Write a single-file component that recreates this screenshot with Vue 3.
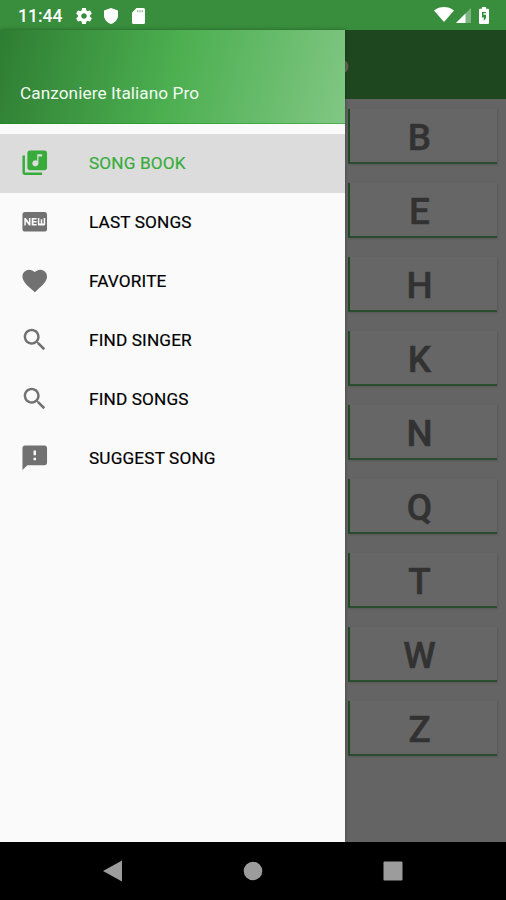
<script setup>
const items = [
  { label: 'SONG BOOK', icon: 'M20 2H8c-1.1 0-2 .9-2 2v12c0 1.100.9 2 2 2h12c1.100 0 2-.9 2-2V4c0-1.100-.9-2-2-2zm-2 5h-3v5.500c0 1.380-1.120 2.500-2.500 2.500S10 13.880 10 12.500s1.120-2.500 2.500-2.500c.57 0 1.080.190 1.500.510V5h4v2zM4 6H2v14c0 1.100.9 2 2 2h14v-2H4V6z', active: true },
  { label: 'LAST SONGS', icon: 'M20 4H4c-1.110 0-1.990.890-1.990 2L2 18c0 1.110.890 2 2 2h16c1.110 0 2-.890 2-2V6c0-1.110-.890-2-2-2zM8.500 15H7.300l-2.550-3.500V15H3.500V9h1.250l2.500 3.500V9H8.500v6zm5-4.740H11v1.120h2.500v1.260H11v1.110h2.500V15h-4V9h4v1.260zm7 3.740c0 .55-.45 1-1 1h-4c-.55 0-1-.45-1-1V9h1.250v4.510h1.130V9.990h1.250v3.510h1.120V9h1.250v5z' },
  { label: 'FAVORITE', icon: 'M12 21.350l-1.450-1.320C5.400 15.360 2 12.280 2 8.500 2 5.420 4.420 3 7.500 3c1.740 0 3.410.810 4.500 2.090C13.090 3.810 14.760 3 16.500 3 19.580 3 22 5.420 22 8.500c0 3.780-3.400 6.860-8.550 11.540L12 21.350z' },
  { label: 'FIND SINGER', icon: 'M15.500 14h-.79l-.28-.27C15.410 12.590 16 11.110 16 9.500 16 5.910 13.090 3 9.500 3S3 5.910 3 9.500 5.910 16 9.500 16c1.610 0 3.090-.590 4.230-1.570l.27.280v.790l5 4.990L20.490 19l-4.990-5zm-6 0C7.010 14 5 11.990 5 9.500S7.010 5 9.500 5 14 7.010 14 9.500 11.990 14 9.500 14z' },
  { label: 'FIND SONGS', icon: 'M15.500 14h-.79l-.28-.27C15.410 12.590 16 11.110 16 9.500 16 5.910 13.090 3 9.500 3S3 5.910 3 9.500 5.910 16 9.500 16c1.610 0 3.090-.590 4.230-1.570l.27.280v.790l5 4.990L20.490 19l-4.990-5zm-6 0C7.010 14 5 11.990 5 9.500S7.010 5 9.500 5 14 7.010 14 9.500 11.990 14 9.500 14z' },
  { label: 'SUGGEST SONG', icon: 'M20 2H4c-1.100 0-1.990.9-1.990 2L2 22l4-4h14c1.100 0 2-.9 2-2V4c0-1.100-.9-2-2-2zm-7 12h-2v-2h2v2zm0-4h-2V6h2v4z' },
]
const letters = ['B', 'E', 'H', 'K', 'N', 'Q', 'T', 'W', 'Z']
</script>

<template>
  <div class="screen">
    <header class="status">
      <span class="time">11:44</span>
      <svg class="gear" viewBox="2 2 20 20"><path d="M19.430 12.980c.04-.32.07-.64.07-.98s-.03-.66-.07-.98l2.110-1.650c.19-.15.24-.42.12-.64l-2-3.460c-.12-.22-.39-.3-.61-.22l-2.490 1c-.52-.4-1.080-.73-1.690-.98l-.38-2.650C14.460 2.180 14.250 2 14 2h-4c-.25 0-.46.18-.49.42l-.38 2.650c-.61.25-1.170.59-1.690.98l-2.490-1c-.23-.09-.49 0-.61.22l-2 3.460c-.13.22-.07.49.12.64l2.110 1.650c-.04.32-.07.65-.07.98s.03.66.07.98l-2.110 1.650c-.19.15-.24.42-.12.64l2 3.460c.12.22.39.3.61.22l2.490-1c.52.4 1.080.73 1.690.98l.38 2.650c.03.24.24.42.49.42h4c.25 0 .46-.18.49-.42l.38-2.650c.61-.25 1.170-.59 1.690-.98l2.490 1c.23.09.49 0 .61-.22l2-3.460c.12-.22.07-.49-.12-.64l-2.110-1.650zM12 15.500c-1.930 0-3.500-1.570-3.500-3.500s1.570-3.500 3.500-3.500 3.500 1.570 3.500 3.500-1.570 3.500-3.500 3.500z" /></svg>
      <svg class="shield" viewBox="0 0 14 16"><path d="M7 0l7 2.600v5C14 11.500 11 15 7 16 3 15 0 11.500 0 7.600v-5z" /></svg>
      <svg class="card-icon" viewBox="0 0 13 16"><path d="M4.500 0H11.500Q13 0 13 1.500V14.500Q13 16 11.500 16H1.500Q0 16 0 14.500V4.500z" /><path class="pins" d="M5 2.200h1.300v2H5zM7.300 2.200h1.300v2H7.300zM9.600 2.200h1.300v2H9.600z" /></svg>
      <span class="spacer"></span>
      <svg class="wifi" viewBox="0 0 20 15"><path d="M0 3.400C5.800-1.100 14.200-1.100 20 3.400L10 15z" /></svg>
      <svg class="signal" viewBox="0 0 15 15"><path d="M15 0v15H0z" opacity=".35" /><path d="M9.500 5.500V15H0z" /></svg>
      <svg class="battery" viewBox="0 0 10 17"><path fill-rule="evenodd" d="M3 0h4v1.700h2q1 0 1 1V16q0 1-1 1H1q-1 0-1-1V2.700q0-1 1-1h2zM3 5h4v1.300H4.500v1.400H7v3.200L4.800 14V10.500H3z" /></svg>
    </header>

    <main class="body">
      <div class="toolbar"><span class="title">Canzoniere Italiano Pro</span></div>
      <div class="letters">
        <div v-for="l in letters" :key="l" class="tile">{{ l }}</div>
      </div>
      <aside class="drawer">
        <div class="head">Canzoniere Italiano Pro</div>
        <nav class="menu">
          <a v-for="i in items" :key="i.label" class="item" :class="{ active: i.active }">
            <svg class="icon" viewBox="0 0 24 24"><path :d="i.icon" /></svg>
            <span>{{ i.label }}</span>
          </a>
        </nav>
      </aside>
    </main>

    <footer class="navbar">
      <svg viewBox="0 0 20 22"><path d="M0 11L19 .5v21z" /></svg>
      <svg viewBox="0 0 20 22"><circle cx="10" cy="11" r="9.300" /></svg>
      <svg viewBox="0 0 20 22"><rect x=".5" y="1.500" width="19" height="19" rx="1" /></svg>
    </footer>
  </div>
</template>

<style>
body {
  margin: 0;
}
</style>

<style scoped>
.screen {
  display: flex;
  flex-direction: column;
  width: 506px;
  height: 900px;
  overflow: hidden;
  font-family: Roboto, "Liberation Sans", sans-serif;
}
.status {
  display: flex;
  align-items: center;
  flex: none;
  box-sizing: border-box;
  height: 30px;
  padding: 1px 16px 0 18px;
  background: #388e3c;
  color: #fff;
}
.status svg {
  flex: none;
  fill: #fff;
}
.status .pins {
  fill: #8fc092;
}
.time {
  width: 58px;
  font-size: 17.500px;
  font-weight: 500;
  line-height: 30px;
}
.gear {
  width: 16px;
  height: 16px;
}
.shield {
  width: 14px;
  height: 16px;
  margin-left: 12px;
}
.card-icon {
  width: 13px;
  height: 16px;
  margin-left: 14px;
}
.spacer {
  flex: 1;
}
.wifi {
  width: 20px;
  height: 15px;
  margin-bottom: 2px;
}
.signal {
  width: 15px;
  height: 15px;
  margin: 0 8px 0 2px;
}
.battery {
  width: 10px;
  height: 17px;
  margin-right: 1px;
}
.body {
  position: relative;
  flex: 1;
  min-height: 0;
  background: #646464;
}
.toolbar {
  display: flex;
  align-items: center;
  height: 69px;
  background: #1f471f;
}
.title {
  width: 349px;
  font-size: 24.600px;
  font-weight: 500;
  text-align: right;
  white-space: nowrap;
  color: #666;
}
.letters {
  display: flex;
  flex-direction: column;
  gap: 19.050px;
  padding: 9.500px 9px 0 348px;
}
.tile {
  box-sizing: border-box;
  height: 55px;
  padding-right: 8px;
  border-left: 2px solid #1f4a22;
  border-bottom: 2px solid #2b4d2f;
  background: #666;
  box-shadow: 1px 1px 2px rgba(0, 0, 0, 0.12);
  color: #323232;
  font-size: 36.900px;
  font-weight: 500;
  line-height: 58px;
  text-align: center;
  -webkit-text-stroke: 0.500px #323232;
}
.drawer {
  position: absolute;
  top: 0;
  bottom: 0;
  left: 0;
  width: 345px;
  background: #fafafa;
  box-shadow: 0 0 4px rgba(0, 0, 0, 0.35);
}
.head {
  box-sizing: border-box;
  height: 93.500px;
  padding: 52px 20px 0;
  background: linear-gradient(105deg, #2e7d32 0%, #4caf50 50%, #81c784 100%);
  box-shadow: inset 0 -1px 0 rgba(0, 145, 10, 0.400);
  color: #f2faf2;
  font-size: 17.200px;
  line-height: 22px;
  letter-spacing: 0.080px;
}
.menu {
  display: flex;
  flex-direction: column;
  padding-top: 10px;
}
.item {
  display: flex;
  align-items: center;
  height: 59px;
  padding-left: 20px;
  color: #000;
  font-size: 17.200px;
  letter-spacing: 0.150px;
  -webkit-text-stroke: 0.200px currentColor;
}
.item.active {
  background: #dcdcdc;
  color: #37ac3b;
}
.icon {
  width: 29.500px;
  height: 29.500px;
  margin-right: 39.500px;
  fill: #717171;
}
.active .icon {
  fill: #37ac3b;
}
.navbar {
  display: flex;
  align-items: center;
  justify-content: center;
  gap: 120px;
  flex: none;
  height: 58px;
  background: #000;
}
.navbar svg {
  width: 20px;
  height: 22px;
  fill: #9c9c9c;
}
</style>
